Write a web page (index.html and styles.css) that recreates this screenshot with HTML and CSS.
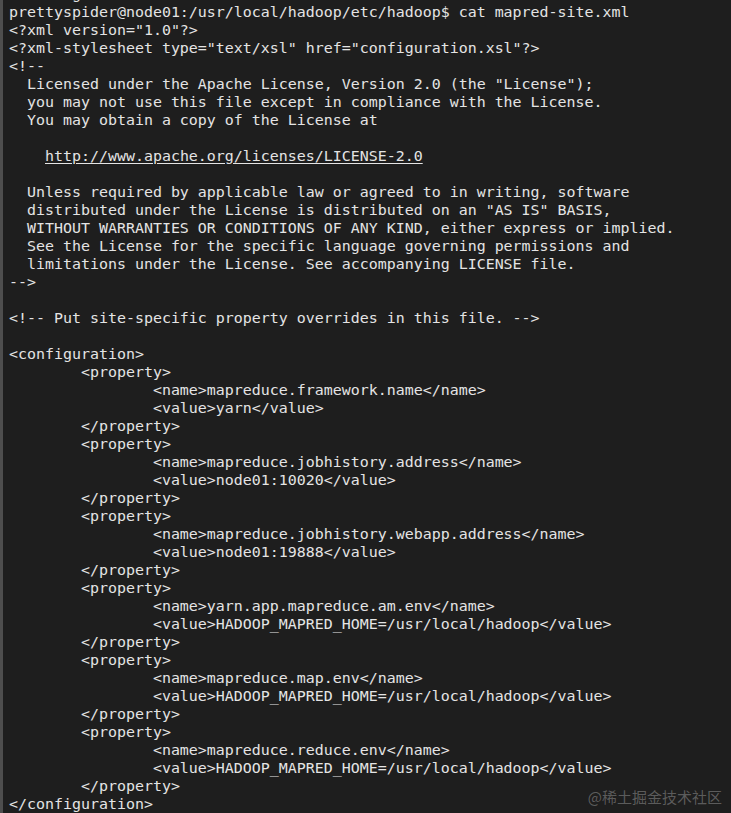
FILE: index.html
```html
<!DOCTYPE html>
<html>
<head>
<meta charset="utf-8">
<link rel="stylesheet" href="styles.css">
</head>
<body>
<div class="term">
<pre class="out"><span class="prev">       g</span>
prettyspider@node01:/usr/local/hadoop/etc/hadoop$ cat mapred-site.xml
&lt;?xml version="1.0"?&gt;
&lt;?xml-stylesheet type="text/xsl" href="configuration.xsl"?&gt;
&lt;!--
  Licensed under the Apache License, Version 2.0 (the "License");
  you may not use this file except in compliance with the License.
  You may obtain a copy of the License at

    <span class="link">http://www.apache.org/licenses/LICENSE-2.0</span>

  Unless required by applicable law or agreed to in writing, software
  distributed under the License is distributed on an "AS IS" BASIS,
  WITHOUT WARRANTIES OR CONDITIONS OF ANY KIND, either express or implied.
  See the License for the specific language governing permissions and
  limitations under the License. See accompanying LICENSE file.
--&gt;

&lt;!-- Put site-specific property overrides in this file. --&gt;

&lt;configuration&gt;
	&lt;property&gt;
		&lt;name&gt;mapreduce.framework.name&lt;/name&gt;
		&lt;value&gt;yarn&lt;/value&gt;
	&lt;/property&gt;
	&lt;property&gt;
		&lt;name&gt;mapreduce.jobhistory.address&lt;/name&gt;
		&lt;value&gt;node01:10020&lt;/value&gt;
	&lt;/property&gt;
	&lt;property&gt;
		&lt;name&gt;mapreduce.jobhistory.webapp.address&lt;/name&gt;
		&lt;value&gt;node01:19888&lt;/value&gt;
	&lt;/property&gt;
	&lt;property&gt;
		&lt;name&gt;yarn.app.mapreduce.am.env&lt;/name&gt;
		&lt;value&gt;HADOOP_MAPRED_HOME=/usr/local/hadoop&lt;/value&gt;
	&lt;/property&gt;
	&lt;property&gt;
		&lt;name&gt;mapreduce.map.env&lt;/name&gt;
		&lt;value&gt;HADOOP_MAPRED_HOME=/usr/local/hadoop&lt;/value&gt;
	&lt;/property&gt;
	&lt;property&gt;
		&lt;name&gt;mapreduce.reduce.env&lt;/name&gt;
		&lt;value&gt;HADOOP_MAPRED_HOME=/usr/local/hadoop&lt;/value&gt;
	&lt;/property&gt;
&lt;/configuration&gt;</pre>
<div class="mark">@稀土掘金技术社区</div>
</div>
</body>
</html>
```
FILE: styles.css
```css
html, body {
  margin: 0;
  padding: 0;
  background: #1e1e1e;
  height: 100%;
  overflow: hidden;
}
.term {
  position: relative;
  height: 813px;
  border-left: 3px solid #4e4e4e;
  box-sizing: border-box;
  overflow: hidden;
}
.out {
  margin: -15px 0 0 0;
  padding-left: 6px;
  font-family: "DejaVu Sans Mono", monospace;
  font-size: 14.95px;
  line-height: 18px;
  color: #e4e4e4;
  tab-size: 8;
  white-space: pre;
}
.link {
  text-decoration: underline;
  text-underline-offset: 2px;
}
.mark {
  position: absolute;
  right: 9px;
  bottom: 6px;
  font-family: "Noto Sans CJK SC", sans-serif;
  font-size: 15px;
  color: rgba(170, 170, 170, 0.45);
}
```
